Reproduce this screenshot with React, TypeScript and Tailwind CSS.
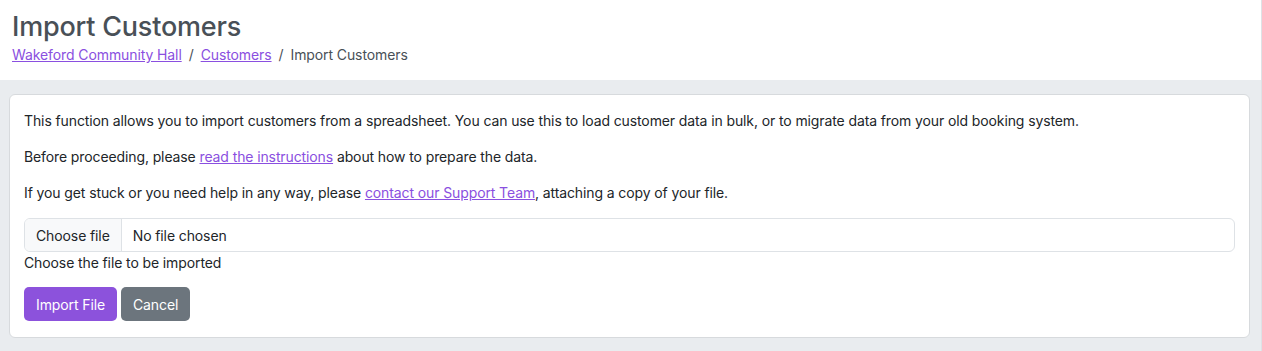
export default function App() {
  return (
    <div className="min-h-screen bg-[#e9ecef] border-r border-[#dee2e6] text-[#212529]" style={{ fontFamily: 'Inter, "Noto Sans", sans-serif' }}>
      <div className="bg-white h-[80px] px-3 pt-[10px]">
        <h1 className="text-[27px] leading-[34px] font-medium text-[#495057] tracking-[-0.2px]">Import Customers</h1>
        <nav className="flex items-center text-[14px] leading-[20px] mt-[1px] text-[#495057] tracking-[-0.1px]">
          <a href="#" className="text-[#8a4fe0] underline">Wakeford Community Hall</a>
          <span className="px-[7px]">/</span>
          <a href="#" className="text-[#8a4fe0] underline">Customers</a>
          <span className="px-[7px]">/</span>
          <span>Import Customers</span>
        </nav>
      </div>
      <div className="pt-[14px] pl-[9px] pr-[11px] pb-[14px]">
        <div className="bg-white border border-[#d7dadd] rounded-[6px] pt-[15px] px-[14px] pb-4 text-[14px] leading-[21px] tracking-[-0.11px]">
          <p className="mb-[15px]">
            This function allows you to import customers from a spreadsheet. You can use this to load customer data in bulk, or to migrate data from your old booking system.
          </p>
          <p className="mb-[15px]">
            Before proceeding, please <a href="#" className="text-[#8a4fe0] underline">read the instructions</a> about how to prepare the data.
          </p>
          <p className="mb-[15px]">
            If you get stuck or you need help in any way, please <a href="#" className="text-[#8a4fe0] underline">contact our Support Team</a>, attaching a copy of your file.
          </p>
          <div className="flex h-[34px] border border-[#dee2e6] rounded-[6px] overflow-hidden">
            <div className="flex items-center px-[11px] bg-[#f8f9fa] border-r border-[#dee2e6]">Choose file</div>
            <div className="flex items-center px-[11px] bg-white">No file chosen</div>
          </div>
          <div>Choose the file to be imported</div>
          <div className="flex gap-[4px] mt-[14px]">
            <button className="h-[34px] px-3 rounded-[5px] bg-[#8c52dc] text-white">Import File</button>
            <button className="h-[34px] px-3 rounded-[5px] bg-[#6c757d] text-white">Cancel</button>
          </div>
        </div>
      </div>
    </div>
  );
}
